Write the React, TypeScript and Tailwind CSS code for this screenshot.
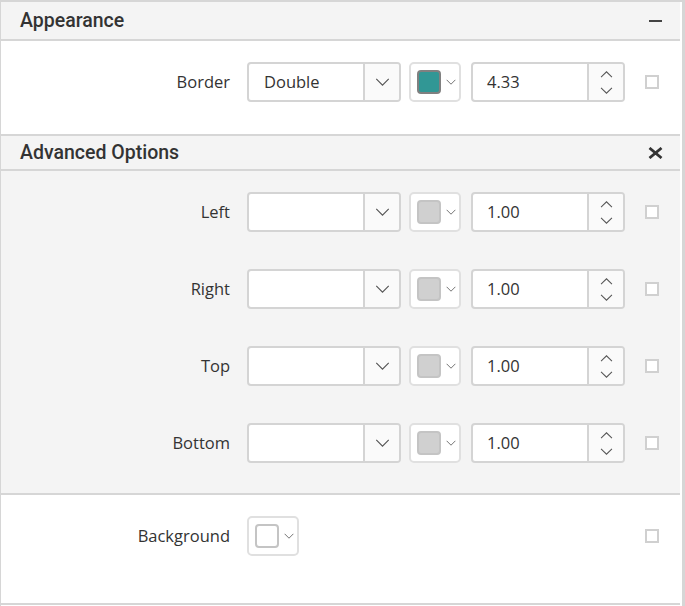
import React from "react";

const font = { fontFamily: '"Open Sans", "Noto Sans", sans-serif' };

function Chevron({ className = "", up = false }: { className?: string; up?: boolean }) {
  return (
    <svg viewBox="0 0 16 9" className={className} fill="none" stroke="currentColor" strokeWidth={1.3}>
      {up ? <path d="M1 8 L8 1 L15 8" /> : <path d="M1 1 L8 8 L15 1" />}
    </svg>
  );
}

function Dropdown({ value }: { value: string }) {
  return (
    <div className="flex h-[40px] w-[154px] rounded-[4px] border-2 border-[#d4d4d4] bg-white overflow-hidden">
      <div className="flex flex-1 items-center pl-[15px] text-[16.5px] text-[#333]">{value}</div>
      <div className="flex w-[36px] items-center justify-center border-l-2 border-[#d4d4d4] bg-[#fafafa] text-[#555]">
        <Chevron className="w-[15px] h-[8px]" />
      </div>
    </div>
  );
}

function ColorPicker({ color, border = "border-[#a8a8a8]" }: { color: string; border?: string }) {
  return (
    <div className="flex h-[40px] w-[52px] items-center rounded-[5px] border-2 border-[#e0e0e0] bg-white pl-[6px]">
      <div className={`h-[24px] w-[24px] rounded-[4px] border-2 ${border}`} style={{ backgroundColor: color }} />
      <Chevron className="ml-[5px] w-[10px] h-[6px] text-[#555]" />
    </div>
  );
}

function Numeric({ value }: { value: string }) {
  return (
    <div className="flex h-[40px] w-[154px] rounded-[4px] border-2 border-[#d4d4d4] bg-white overflow-hidden">
      <div className="flex flex-1 items-center pl-[14px] text-[16.5px] text-[#333]">{value}</div>
      <div className="flex w-[36px] flex-col items-center justify-center gap-[9px] border-l-2 border-[#d4d4d4] bg-[#fafafa] text-[#555]">
        <Chevron up className="w-[13px] h-[7px]" />
        <Chevron className="w-[13px] h-[7px]" />
      </div>
    </div>
  );
}

function Check() {
  return <div className="h-[14px] w-[14px] border-2 border-[#d0d0d0] bg-white" />;
}

function Row({ label, children }: { label: string; children: React.ReactNode }) {
  return (
    <div className="flex items-center">
      <div className="w-[229px] text-right text-[16.5px] text-[#333]">{label}</div>
      <div className="ml-[17px] flex flex-1 items-center">{children}</div>
      <div className="mr-[21px]"><Check /></div>
    </div>
  );
}

function BorderRow({ label, value, color, style }: { label: string; value: string; color: string; style: string }) {
  return (
    <Row label={label}>
      <Dropdown value={style} />
      <div className="ml-[8px]"><ColorPicker color={color} border={color === "#319795" ? "border-[#808080]" : "border-[#c4c4c4]"} /></div>
      <div className="ml-[10px]"><Numeric value={value} /></div>
    </Row>
  );
}

export default function App() {
  return (
    <div style={font} className="h-[606px] w-[685px] bg-white">
      <div className="flex h-[606px] flex-col border-t-2 border-l border-r-[3px] border-[#d6d6d6] pr-[2px]">
        {/* Appearance */}
        <div className="flex h-[37px] shrink-0 items-center justify-between bg-[#f4f4f4] pl-[19px] pr-[18px]">
          <span style={{ fontFamily: "Roboto, sans-serif" }} className="text-[19.5px] font-medium text-[#333]">Appearance</span>
          <span className="h-[2px] w-[13px] bg-[#444]" />
        </div>
        <div className="h-[2px] shrink-0 bg-[#d6d6d6]" />
        <div className="flex h-[93px] shrink-0 flex-col bg-white pt-[21px]">
          <BorderRow label="Border" style="Double" color="#319795" value="4.33" />
        </div>
        <div className="h-[2px] shrink-0 bg-[#d6d6d6]" />

        {/* Advanced Options */}
        <div className="flex h-[33px] shrink-0 items-center justify-between bg-[#f4f4f4] pl-[19px] pr-[17px]">
          <span style={{ fontFamily: "Roboto, sans-serif" }} className="text-[19.5px] font-medium text-[#333]">Advanced Options</span>
          <svg viewBox="0 0 15 12" className="h-[12px] w-[15px]" stroke="#333" strokeWidth={2.8}>
            <path d="M1.5 1 L13.5 11 M13.5 1 L1.5 11" />
          </svg>
        </div>
        <div className="h-[2px] shrink-0 bg-[#d6d6d6]" />
        <div className="flex h-[322px] shrink-0 flex-col gap-[37px] bg-[#f4f4f4] pt-[21px]">
          <BorderRow label="Left" style="" color="#d0d0d0" value="1.00" />
          <BorderRow label="Right" style="" color="#d0d0d0" value="1.00" />
          <BorderRow label="Top" style="" color="#d0d0d0" value="1.00" />
          <BorderRow label="Bottom" style="" color="#d0d0d0" value="1.00" />
        </div>
        <div className="h-[2px] shrink-0 bg-[#d6d6d6]" />

        {/* Background */}
        <div className="flex h-[108px] shrink-0 flex-col bg-white pt-[21px]">
          <Row label="Background">
            <ColorPicker color="#ffffff" border="border-[#c4c4c4]" />
          </Row>
        </div>
        <div className="h-[2px] shrink-0 bg-[#d6d6d6]" />
      </div>
    </div>
  );
}
